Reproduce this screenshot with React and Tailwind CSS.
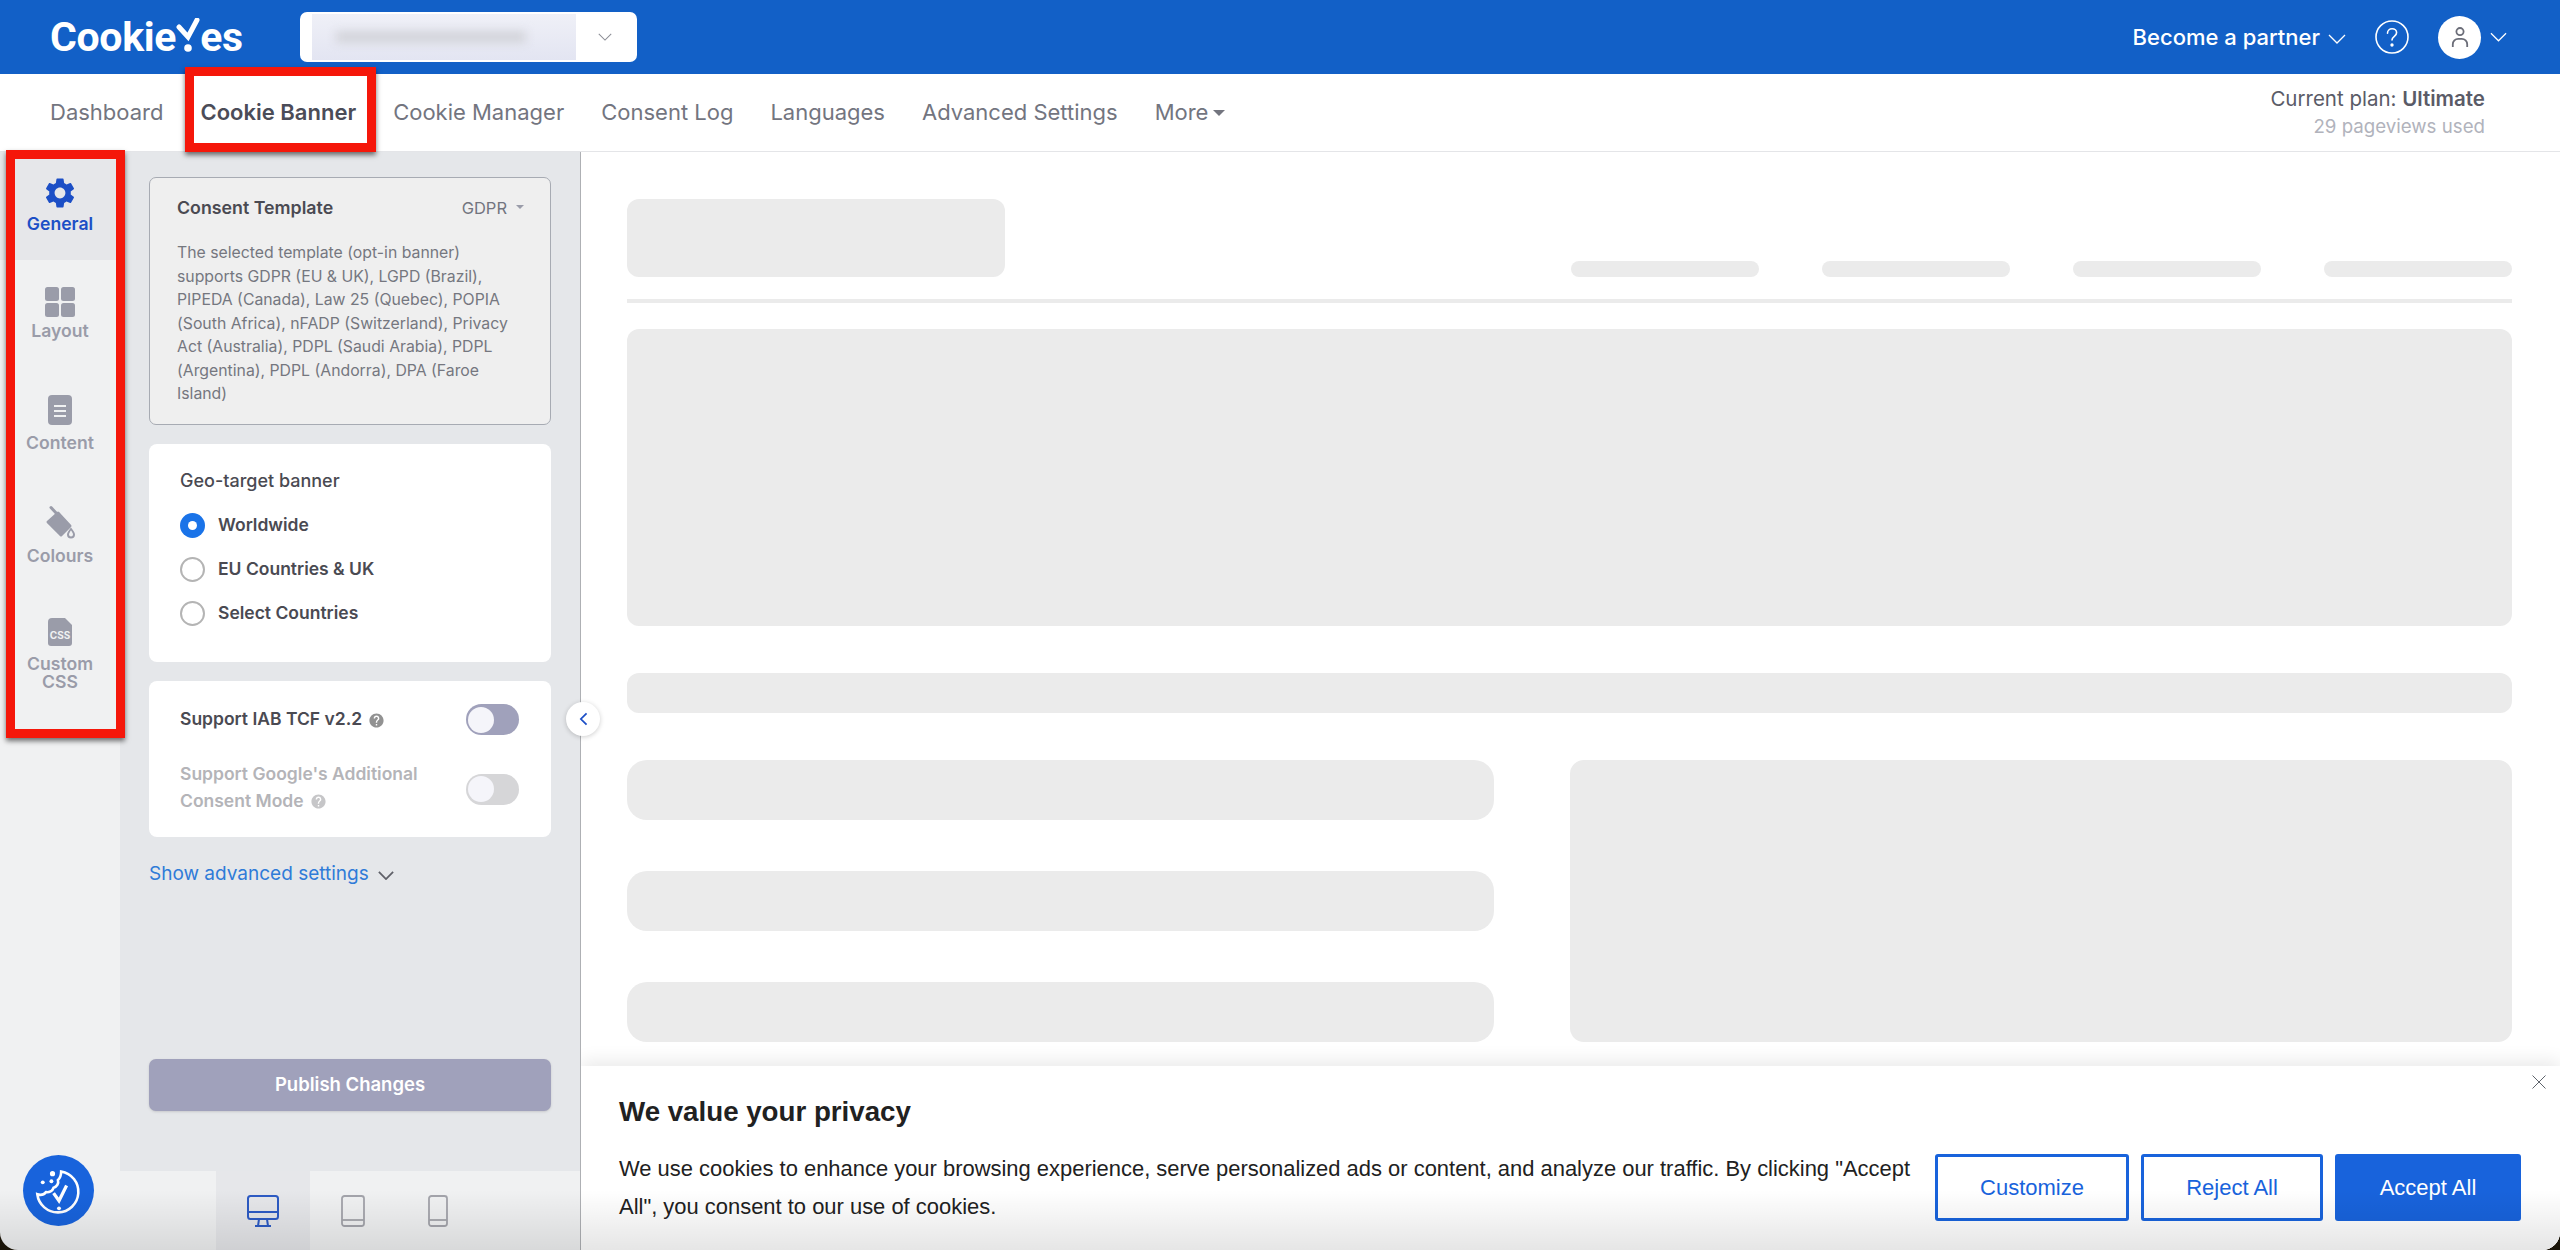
import React from "react";
import { MdSettings, MdHelp } from "react-icons/md";

const Chevron = ({ className }) => (
  <svg viewBox="0 0 18 10" fill="none" stroke="currentColor" strokeWidth="1.3" className={className}>
    <path d="M1 1l8 8 8-8" />
  </svg>
);

const Logo = () => (
  <div className="flex items-center w-[196px] text-white font-bold text-[41px] leading-none tracking-[-0.3px] font-['Roboto',sans-serif]">
    <span>Cookie</span>
    <svg viewBox="0 0 24 36" className="w-[24px] h-[36px] mb-[2px]" fill="none">
      <path d="M3 9l9 10 9-17" stroke="white" strokeWidth="5" strokeLinecap="round" />
      <circle cx="12" cy="30" r="3.8" fill="white" />
    </svg>
    <span>es</span>
  </div>
);

const TopBar = () => (
  <header className="h-[74px] shrink-0 bg-[#1260c7] flex items-center pl-[50px] pr-[53px]">
    <Logo />
    <div className="ml-[54px] w-[337px] h-[50px] bg-white rounded-[7px] flex items-center pl-[12px] pr-[25px]">
      <div className="w-[264px] h-[46px] bg-gradient-to-b from-[#eff0f7] to-[#e3e5f2] flex items-center pl-[24px] overflow-hidden">
        <div className="w-[190px] h-[12px] bg-[#d3d4da] blur-[5px]" />
      </div>
      <Chevron className="ml-auto w-[14px] h-[8px] text-[#8b8d95]" />
    </div>
    <div className="ml-auto flex items-center font-['Inter',sans-serif] text-white">
      <span className="text-[22px] font-medium">Become a partner</span>
      <Chevron className="ml-[8px] mt-[3px] w-[18px] h-[10px]" />
      <svg viewBox="0 0 34 34" className="ml-[29px] w-[34px] h-[34px]" fill="none" stroke="white" strokeWidth="1.6">
        <circle cx="17" cy="17" r="16" />
        <path d="M12.5 13.2c0-2.6 2-4.4 4.6-4.4s4.5 1.7 4.500 4c0 3.400-4.600 3.600-4.600 7.200" strokeLinecap="round" />
        <circle cx="17" cy="25" r="0.9" fill="white" />
      </svg>
      <div className="ml-[29px] w-[43px] h-[43px] rounded-full bg-white flex items-center justify-center">
        <svg viewBox="0 0 20 24" className="w-[18px] h-[22px]" fill="none" stroke="#6b6d78" strokeWidth="2">
          <circle cx="10" cy="6" r="4" />
          <path d="M2 23v-3a6 6 0 0 1 6-6h4a6 6 0 0 1 6 6v3" />
        </svg>
      </div>
      <Chevron className="ml-[9px] w-[17px] h-[10px]" />
    </div>
  </header>
);

const NavBar = () => (
  <nav className="h-[78px] shrink-0 bg-white border-b border-[#e4e5e8] flex items-center pl-[50px] pr-[75px] font-['Inter',sans-serif] text-[#73757f] text-[22px]">
    <div className="flex items-center gap-[37px]">
      <span>Dashboard</span>
      <span className="font-semibold text-[#4b4c58]">Cookie Banner</span>
      <span>Cookie Manager</span>
      <span>Consent Log</span>
      <span>Languages</span>
      <span>Advanced Settings</span>
      <span className="flex items-center">
        More
        <span className="ml-[5px] mt-[1px] w-0 h-0 border-x-[6px] border-x-transparent border-t-[6px] border-t-[#73757f]" />
      </span>
    </div>
    <div className="ml-auto flex flex-col items-end">
      <span className="text-[20.5px] leading-[28px] text-[#5a5b67]">
        Current plan: <b className="font-semibold">Ultimate</b>
      </span>
      <span className="text-[18.7px] leading-[28px] text-[#b1b3bc]">29 pageviews used</span>
    </div>
  </nav>
);

const IconLayout = () => (
  <svg viewBox="0 0 30 30" className="w-[30px] h-[30px]" fill="#9a9ca9">
    <rect x="0" y="0" width="14" height="14" rx="2.5" />
    <rect x="16" y="0" width="14" height="14" rx="2.5" />
    <rect x="0" y="16" width="14" height="14" rx="2.5" />
    <rect x="16" y="16" width="14" height="14" rx="2.5" />
  </svg>
);
const IconContent = () => (
  <svg viewBox="0 0 24 30" className="w-[24px] h-[30px]">
    <rect width="24" height="30" rx="4" fill="#9a9ca9" />
    <path d="M6 11h12M6 16h12M6 21h12" stroke="#f0f1f2" strokeWidth="2.2" />
  </svg>
);
const IconColours = () => (
  <svg viewBox="0 0 32 34" className="w-[32px] h-[34px]">
    <path d="M4 17L14 8l12 13-9 9z" fill="#9a9ca9" stroke="#9a9ca9" strokeWidth="3" strokeLinejoin="round" />
    <path d="M13 9L7 2.500" stroke="#9a9ca9" strokeWidth="3" fill="none" strokeLinecap="round" />
    <path d="M27 24c-2 2.500-3 4-3 5.500a3 3 0 0 0 6 0c0-1.500-1-3-3-5.500z" fill="none" stroke="#9a9ca9" strokeWidth="2" />
  </svg>
);
const IconCss = () => (
  <svg viewBox="0 0 24 28" className="w-[24px] h-[28px]">
    <path d="M4 0h13l7 7v18a3 3 0 0 1-3 3H3a3 3 0 0 1-3-3V4a4 4 0 0 1 4-4z" fill="#9a9ca9" />
    <text x="12" y="21" textAnchor="middle" fontSize="10" fontWeight="700" fill="#f0f1f2" fontFamily="Inter, sans-serif">CSS</text>
  </svg>
);

const SideItem = ({ icon, label, active, boxClass, gapClass }) => (
  <div className={`flex flex-col items-center pt-[27px] ${boxClass} ${active ? "bg-[#e6e7ea] text-[#1c4fc6]" : "text-[#9a9ca9]"}`}>
    <div className="h-[32px] flex items-start justify-center">{icon}</div>
    <span className={`text-[17.6px] leading-[18px] font-semibold text-center ${gapClass}`}>{label}</span>
  </div>
);

const Sidebar = () => (
  <aside className="w-[120px] shrink-0 flex flex-col font-['Inter',sans-serif]">
    <SideItem active boxClass="h-[108px]" gapClass="mt-[4px]" label="General" icon={<MdSettings className="w-[36px] h-[36px] -mt-[4px] text-[#1c4fc6]" />} />
    <SideItem boxClass="h-[108px]" gapClass="mt-[3px]" label="Layout" icon={<IconLayout />} />
    <SideItem boxClass="h-[110px]" gapClass="mt-[7px]" label="Content" icon={<IconContent />} />
    <SideItem boxClass="h-[113px]" gapClass="mt-[10px]" label="Colours" icon={<IconColours />} />
    <SideItem
      boxClass="h-[120px]"
      gapClass="mt-[5px]"
      label={<>Custom<br />CSS</>}
      icon={<IconCss />}
    />
  </aside>
);

const Radio = ({ checked, label }) => (
  <div className="h-[44px] flex items-center gap-[13px]">
    {checked ? (
      <span className="w-[25px] h-[25px] rounded-full bg-[#1a73e8] flex items-center justify-center">
        <span className="w-[9px] h-[9px] rounded-full bg-white" />
      </span>
    ) : (
      <span className="w-[25px] h-[25px] rounded-full border-2 border-[#b4b4b4] bg-white" />
    )}
    <span className="text-[17.5px] font-semibold text-[#4a4a52]">{label}</span>
  </div>
);

const Toggle = ({ on }) => (
  <div className={`w-[53px] h-[31px] rounded-full flex items-center pl-[2px] shrink-0 ${on ? "bg-[#a0a1bb]" : "bg-[#d6d6d8]"}`}>
    <span className="w-[26px] h-[26px] rounded-full bg-[#f5f5fa]" />
  </div>
);

const Panel = () => (
  <div className="flex-1 bg-[#e5e7ea] px-[29px] pt-[25px] flex flex-col">
    <section className="h-[248px] rounded-[7px] border border-[#a7abb3] bg-[#efefef] pl-[27px] pr-[33px] pt-[17px]">
      <div className="flex items-center justify-between h-[26px] -mr-[13px]">
        <span className="text-[17.8px] font-semibold text-[#4a4a52]">Consent Template</span>
        <span className="flex items-center text-[16.5px] text-[#73757f] pr-[6px]">
          GDPR
          <span className="ml-[9px] mb-[2px] w-0 h-0 border-x-[4px] border-x-transparent border-t-[4px] border-t-[#9a9ca9]" />
        </span>
      </div>
      <p className="mt-[20px] text-[15.8px] leading-[23.5px] text-[#75777f]">
        The selected template (opt-in banner) supports GDPR (EU &amp; UK), LGPD (Brazil), PIPEDA (Canada), Law 25 (Quebec), POPIA (South Africa), nFADP (Switzerland), Privacy Act (Australia), PDPL (Saudi Arabia), PDPL (Argentina), PDPL (Andorra), DPA (Faroe Island)
      </p>
    </section>
    <section className="mt-[19px] h-[218px] rounded-[8px] bg-white pl-[31px] pt-[23px]">
      <div className="text-[18px] leading-[28px] font-medium text-[#4a4a52] mb-[8px]">Geo-target banner</div>
      <Radio checked label="Worldwide" />
      <Radio label="EU Countries & UK" />
      <Radio label="Select Countries" />
    </section>
    <section className="mt-[19px] h-[156px] rounded-[8px] bg-white pl-[31px] pr-[32px] pt-[23px]">
      <div className="flex items-center justify-between">
        <span className="flex items-center text-[17.5px] font-semibold text-[#4a4a52]">
          Support IAB TCF v2.2
          <MdHelp className="ml-[6px] mt-[2px] w-[17px] h-[17px] text-[#929292]" />
        </span>
        <Toggle on />
      </div>
      <div className="mt-[35px] flex items-center justify-between">
        <p className="w-[260px] -mt-[10px] -mb-[6px] text-[17.5px] leading-[27px] font-semibold text-[#b4b4b8]">
          Support Google's Additional Consent Mode
          <MdHelp className="inline ml-[6px] mb-[2px] w-[17px] h-[17px] text-[#c6c6c8]" />
        </p>
        <Toggle />
      </div>
    </section>
    <div className="mt-[24px] flex items-center text-[19px] leading-[26px] text-[#2f7bd8]">
      Show advanced settings
      <Chevron className="ml-[9px] mt-[2px] w-[16px] h-[9px] text-[#5f6068] [stroke-width:2]" />
    </div>
    <button className="mt-[172px] h-[52px] rounded-[7px] bg-[#a0a1bb] text-white text-[18.5px] font-semibold shadow-sm">
      Publish Changes
    </button>
  </div>
);

const DeviceBar = () => (
  <div className="h-[79px] shrink-0 flex pl-[96px]">
    <div className="w-[94px] bg-[#e6e7ea] flex items-start justify-center pt-[24px]">
      <svg viewBox="0 0 32 32" className="w-[32px] h-[32px]" fill="none" stroke="#2d5bc4" strokeWidth="2">
        <rect x="1" y="1" width="30" height="23" rx="2.5" />
        <path d="M1 17h30M12 24l-1 7M20 24l1 7M8 31h16" />
      </svg>
    </div>
    <div className="w-[86px] flex items-start justify-center pt-[24px]">
      <svg viewBox="0 0 24 32" className="w-[24px] h-[32px]" fill="none" stroke="#a3a4ab" strokeWidth="1.800">
        <rect x="1" y="1" width="22" height="30" rx="2.5" />
        <path d="M1 25h22" />
      </svg>
    </div>
    <div className="w-[84px] flex items-start justify-center pt-[24px]">
      <svg viewBox="0 0 20 32" className="w-[20px] h-[32px]" fill="none" stroke="#a3a4ab" strokeWidth="1.800">
        <rect x="1" y="1" width="18" height="30" rx="2.5" />
        <path d="M1 25h18" />
      </svg>
    </div>
  </div>
);

const Bone = ({ className }) => <div className={`bg-[#ebebeb] ${className}`} />;

const Skeleton = () => (
  <div className="pl-[46px] pr-[48px] pt-[47px]">
    <div className="flex items-end justify-between">
      <Bone className="w-[378px] h-[78px] rounded-[12px]" />
      <div className="flex gap-[63px]">
        <Bone className="w-[188px] h-[16px] rounded-[8px]" />
        <Bone className="w-[188px] h-[16px] rounded-[8px]" />
        <Bone className="w-[188px] h-[16px] rounded-[8px]" />
        <Bone className="w-[188px] h-[16px] rounded-[8px]" />
      </div>
    </div>
    <Bone className="mt-[22px] h-[4px]" />
    <Bone className="mt-[26px] h-[297px] rounded-[12px]" />
    <Bone className="mt-[47px] h-[40px] rounded-[12px]" />
    <div className="mt-[47px] flex justify-between">
      <div className="w-[867px] flex flex-col gap-[51px]">
        <Bone className="h-[60px] rounded-[20px]" />
        <Bone className="h-[60px] rounded-[20px]" />
        <Bone className="h-[60px] rounded-[20px]" />
      </div>
      <Bone className="w-[942px] h-[282px] rounded-[14px]" />
    </div>
  </div>
);

const Banner = () => (
  <div className="absolute left-0 right-0 bottom-0 h-[184px] bg-white shadow-[0_-6px_16px_rgba(0,0,0,0.08)] font-['Liberation_Sans',sans-serif] flex pl-[38px] pr-[39px]">
    <svg viewBox="0 0 14 14" className="absolute right-[14px] top-[9px] w-[14px] h-[14px]" fill="none" stroke="#5f646c" strokeWidth="1">
      <path d="M0.500 0.500l13 13M13.500 0.500l-13 13" />
    </svg>
    <div className="w-[1299px] pt-[27px]">
      <h2 className="text-[27.7px] leading-[38px] font-bold text-[#212121]">We value your privacy</h2>
      <p className="mt-[19px] text-[21.95px] leading-[38px] text-[#212121]">
        We use cookies to enhance your browsing experience, serve personalized ads or content, and analyze our traffic. By clicking "Accept All", you consent to our use of cookies.
      </p>
    </div>
    <div className="ml-auto pt-[88px] flex items-start gap-[12px] text-[22px]">
      <button className="w-[194px] h-[67px] border-[3px] border-[#1863dc] rounded-[3px] text-[#1863dc]">Customize</button>
      <button className="w-[182px] h-[67px] border-[3px] border-[#1863dc] rounded-[3px] text-[#1863dc]">Reject All</button>
      <button className="w-[186px] h-[67px] bg-[#1863dc] rounded-[3px] text-white">Accept All</button>
    </div>
  </div>
);

const CookieWidget = () => (
  <div className="absolute left-[23px] bottom-[24px] w-[71px] h-[71px] rounded-full bg-[#1863dc] flex items-center justify-center">
    <svg viewBox="0 0 48 48" className="w-[52px] h-[52px]" fill="none" stroke="white" strokeWidth="2.4">
      <path d="M26 6a19 19 0 1 1-22 21c3 1 6 .5 8-2 3 .5 6-1 7-4 3-1 5-4 4-7 2-2 3-5 3-8z" />
      <circle cx="9" cy="16" r="1.8" fill="white" stroke="none" />
      <circle cx="18" cy="8" r="2.400" fill="white" stroke="none" />
      <circle cx="17" cy="15" r="1.800" fill="white" stroke="none" />
      <path d="M19 26l5 7 7-14" strokeWidth="3" />
      <circle cx="24" cy="40" r="1.800" fill="white" stroke="none" />
    </svg>
  </div>
);

export default function App() {
  return (
    <div className="w-[2560px] h-[1250px] bg-[#1a1408]">
      <div className="relative w-full h-full overflow-hidden rounded-b-[18px] bg-[#f0f1f2] flex flex-col font-['Inter',sans-serif]">
        <TopBar />
        <NavBar />
        <div className="flex-1 flex min-h-0">
          <Sidebar />
          <div className="w-[461px] shrink-0 flex flex-col border-r border-[#aeb0b4]">
            <Panel />
            <DeviceBar />
          </div>
          <main className="relative flex-1 bg-white overflow-hidden">
            <Skeleton />
            <Banner />
          </main>
        </div>
        <button className="absolute left-[566px] top-[702px] w-[34px] h-[34px] rounded-full bg-white shadow-[0_1px_5px_rgba(0,0,0,0.2)] flex items-center justify-center">
          <svg viewBox="0 0 10 16" className="w-[9px] h-[14px]" fill="none" stroke="#1c4fc6" strokeWidth="2">
            <path d="M8.500 1.500L2 8l6.500 6.500" />
          </svg>
        </button>
        <CookieWidget />
        <div className="absolute left-0 right-0 bottom-0 h-[60px] bg-gradient-to-b from-transparent to-black/10 pointer-events-none" />
        <div className="absolute left-[185px] top-[67px] w-[191px] h-[85px] border-[9px] border-[#f5170a] shadow-[0_3px_5px_rgba(0,0,0,0.55)]" />
        <div className="absolute left-[6px] top-[150px] w-[119px] h-[588px] border-[9px] border-[#f5170a] shadow-[0_3px_5px_rgba(0,0,0,0.55)]" />
      </div>
    </div>
  );
}
